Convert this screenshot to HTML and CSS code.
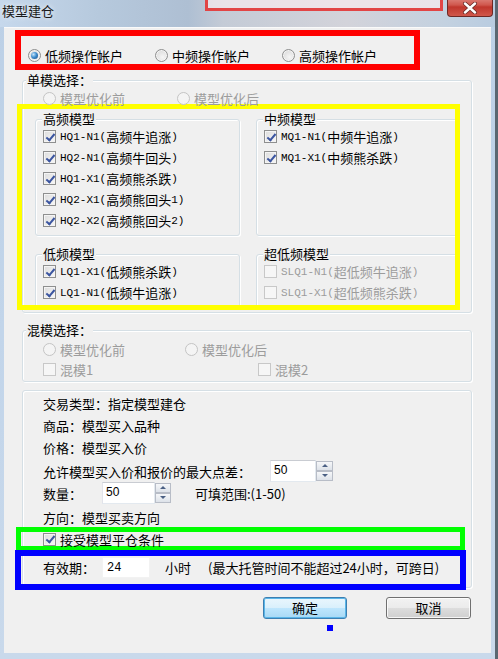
FILE: index.html
```html
<!DOCTYPE html>
<html lang="zh-CN">
<head>
<meta charset="utf-8">
<title>模型建仓</title>
<link rel="stylesheet" href="styles.css">
</head>
<body>
<div class="window">
  <div class="titlebar">
    <div class="bg-mark"></div>
    <span class="title">模型建仓</span>
    <div class="close">
      <svg width="16" height="12" viewBox="0 0 16 12"><path d="M3 1.5 L13 10.5 M13 1.5 L3 10.5" stroke="#6a2a26" stroke-width="4" stroke-linecap="round"/><path d="M3 1.5 L13 10.5 M13 1.5 L3 10.5" stroke="#ffffff" stroke-width="2.4" stroke-linecap="round"/></svg>
    </div>
  </div>
  <div class="client">
    <div class="ann-red acct">
      <div class="opt w127"><span class="radio on"></span>低频操作帐户</div>
      <div class="opt w127"><span class="radio"></span>中频操作帐户</div>
      <div class="opt"><span class="radio"></span>高频操作帐户</div>
    </div>

    <div class="group g-single">
      <div class="glabel">单模选择：</div>
      <div class="row r-dis">
        <div class="opt dis w134"><span class="radio"></span>模型优化前</div>
        <div class="opt dis"><span class="radio"></span>模型优化后</div>
      </div>
      <div class="ann-yellow">
        <div class="models">
          <div class="group sub">
            <div class="glabel">高频模型</div>
            <div class="opt crow"><span class="check on"></span><span class="m">HQ1-N1(</span>高频牛追涨<span class="m">)</span></div>
            <div class="opt crow"><span class="check on"></span><span class="m">HQ2-N1(</span>高频牛回头<span class="m">)</span></div>
            <div class="opt crow"><span class="check on"></span><span class="m">HQ1-X1(</span>高频熊杀跌<span class="m">)</span></div>
            <div class="opt crow"><span class="check on"></span><span class="m">HQ2-X1(</span>高频熊回头<span class="m">1)</span></div>
            <div class="opt crow"><span class="check on"></span><span class="m">HQ2-X2(</span>高频熊回头<span class="m">2)</span></div>
          </div>
          <div class="group sub">
            <div class="glabel">中频模型</div>
            <div class="opt crow"><span class="check on"></span><span class="m">MQ1-N1(</span>中频牛追涨<span class="m">)</span></div>
            <div class="opt crow"><span class="check on"></span><span class="m">MQ1-X1(</span>中频熊杀跌<span class="m">)</span></div>
          </div>
          <div class="group sub">
            <div class="glabel">低频模型</div>
            <div class="opt crow"><span class="check on"></span><span class="m">LQ1-X1(</span>低频熊杀跌<span class="m">)</span></div>
            <div class="opt crow"><span class="check on"></span><span class="m">LQ1-N1(</span>低频牛追涨<span class="m">)</span></div>
          </div>
          <div class="group sub">
            <div class="glabel">超低频模型</div>
            <div class="opt crow dis"><span class="check"></span><span class="m">SLQ1-N1(</span>超低频牛追涨<span class="m">)</span></div>
            <div class="opt crow dis"><span class="check"></span><span class="m">SLQ1-X1(</span>超低频熊杀跌<span class="m">)</span></div>
          </div>
        </div>
      </div>
    </div>

    <div class="group g-mix">
      <div class="glabel">混模选择：</div>
      <div class="row r-mixradio">
        <div class="opt dis w142"><span class="radio"></span>模型优化前</div>
        <div class="opt dis"><span class="radio"></span>模型优化后</div>
      </div>
      <div class="row r-mixcheck">
        <div class="opt dis w215"><span class="check"></span>混模1</div>
        <div class="opt dis"><span class="check"></span>混模2</div>
      </div>
    </div>

    <div class="group g-info">
      <div class="row info r1">交易类型：指定模型建仓</div>
      <div class="row info">商品：模型买入品种</div>
      <div class="row info">价格：模型买入价</div>
      <div class="row info r4">
        <span class="lbl-long">允许模型买入价和报价的最大点差：</span>
        <div class="spin s1">
          <div class="tb">50</div>
          <div class="spinbtns"><span class="up"></span><span class="down"></span></div>
        </div>
      </div>
      <div class="row info">
        <span class="lbl">数量：</span>
        <div class="spin s2">
          <div class="tb">50</div>
          <div class="spinbtns"><span class="up"></span><span class="down"></span></div>
        </div>
        <span class="range">可填范围:(1-50)</span>
      </div>
      <div class="row info r6">方向：模型买卖方向</div>
      <div class="ann-green">
        <div class="opt"><span class="check on"></span>接受模型平仓条件</div>
      </div>
      <div class="ann-blue">
        <span class="lbl">有效期：</span>
        <div class="tb tb24">24</div>
        <span class="hours">小时</span>
        <span class="note">(最大托管时间不能超过24小时，可跨日)</span>
      </div>
    </div>

    <div class="buttons">
      <div class="btn default">确定</div>
      <div class="btn cancel">取消</div>
    </div>
    <div class="dot"></div>
  </div>
</div>
</body>
</html>
```
FILE: styles.css
```css
* { box-sizing: border-box; }
html, body { margin: 0; padding: 0; }
body {
  width: 498px;
  height: 659px;
  overflow: hidden;
  background: #46535e;
  font-family: "Noto Sans CJK SC", "Microsoft YaHei", sans-serif;
  font-size: 13px;
  color: #000;
}
.window {
  width: 498px;
  height: 659px;
  background: linear-gradient(#bcd0e6, #c2d5ea 50%, #c9d9eb);
  border-right: 3px solid #5a6771;
  display: flex;
  flex-direction: column;
}
.titlebar {
  position: relative;
  height: 27px;
  flex: none;
  display: flex;
  align-items: flex-start;
  background: linear-gradient(to right, #c6d8ec 0%, #b6c9dd 20%, #aebfd3 38%, #c4cbd6 45%, #d3d3da 70%, #c3d1e0 90%, #b9cce0 100%);
  overflow: hidden;
}
.bg-mark {
  position: absolute;
  left: 205px;
  top: -4px;
  width: 238px;
  height: 15px;
  border: 3px solid rgba(225, 40, 40, 0.85);
  background: rgba(250, 235, 238, 0.7);
  filter: blur(0.6px);
}
.title {
  position: relative;
  padding-left: 2px;
  line-height: 22px;
  height: 22px;
  color: #1a1a1a;
  text-shadow: 0 0 5px rgba(255, 255, 255, 0.9);
}
.close {
  position: relative;
  margin-left: auto;
  margin-right: 2px;
  margin-top: -4px;
  width: 46px;
  height: 21px;
  border: 1px solid #6e2824;
  border-top: none;
  border-radius: 0 0 4px 4px;
  background: linear-gradient(#e2918a, #d0574d 45%, #c0362c 55%, #d0584c);
  display: flex;
  align-items: center;
  justify-content: center;
  padding-top: 3px;
}
.client {
  margin-left: 4px;
  width: 487px;
  height: 626px;
  flex: none;
  background: #f0f0f0;
  border-top: 1px solid #fafafa;
  display: flex;
  flex-direction: column;
  align-items: flex-start;
}

/* annotation boxes */
.ann-red {
  margin: 2px 0 0 11px;
  width: 405px;
  height: 40px;
  border: 6px solid #ff0000;
}
.acct {
  display: flex;
  align-items: center;
  padding: 10px 0 0 7px;
}
.ann-yellow {
  margin: -2px 0 0 -6px;
  width: 443px;
  height: 206px;
  border: 5px solid #ffff00;
  overflow: hidden;
}
.ann-green {
  margin: 0 0 0 -7px;
  width: 449px;
  height: 24px;
  border: 5px solid #00ff00;
  padding-left: 22px;
  display: flex;
  align-items: center;
}
.ann-blue {
  margin: -1px 0 -3px -8px;
  width: 451px;
  height: 40px;
  border: 6px solid #0000ff;
  padding: 1px 0 0 22px;
  display: flex;
  align-items: flex-start;
  line-height: 21px;
  position: relative;
}

/* group boxes */
.group {
  border: 1px solid #d5dfe5;
  border-radius: 3px;
  box-shadow: inset 1px 1px 0 #ffffff, 1px 1px 0 #ffffff;
}
.glabel {
  width: max-content;
  height: 16px;
  line-height: 16px;
  margin: -9px 0 0 3px;
  padding: 0 1px;
  background: #f0f0f0;
  position: relative;
}
.g-single {
  margin: 10px 0 0 18px;
  width: 450px;
  padding-bottom: 2px;
}
.g-mix {
  margin: 17px 0 0 18px;
  width: 450px;
  padding-bottom: 1px;
}
.g-info {
  margin: 8px 0 0 18px;
  width: 450px;
}
.models {
  padding: 10px 0 0 13px;
  display: grid;
  grid-template-columns: 205px 205px;
  column-gap: 16px;
  row-gap: 18px;
}
.sub { padding: 0 0 4px 7px; }
.sub .glabel { margin: -9px 0 -1px -1px; }

/* rows */
.row {
  display: flex;
  align-items: center;
  padding-left: 20px;
}
.r-dis { height: 16px; margin-top: 2px; }
.r-mixradio { height: 20px; margin-top: 1px; }
.r-mixcheck { height: 21px; }
.info { height: 22px; }
.r1 { margin-top: 1px; }
.r4 { margin-top: 2px; }
.r6 { height: 20px; margin-top: 3px; }

.opt {
  display: flex;
  align-items: center;
  white-space: nowrap;
}
.crow { height: 21px; }
.w127 { width: 127px; }
.w134 { width: 134px; }
.w142 { width: 142px; }
.w215 { width: 215px; }
.dis { color: #9c9c9c; }
.m {
  font-family: "Liberation Mono", "Courier New", monospace;
  font-size: 11px;
}

/* controls */
.radio {
  position: relative;
  flex: none;
  width: 13px;
  height: 13px;
  margin-right: 4px;
  border-radius: 50%;
  border: 1px solid #8e8f8f;
  background: radial-gradient(circle at 60% 65%, #f6f6f6 0%, #dedede 70%, #cfcfcf 100%);
  box-shadow: inset 0 0 0 1px #f4f4f4;
}
.radio.on::after {
  content: "";
  position: absolute;
  left: 2px;
  top: 2px;
  width: 7px;
  height: 7px;
  border-radius: 50%;
  background: radial-gradient(circle at 35% 35%, #c8e6fb 0%, #3f8fd0 45%, #17467d 100%);
}
.dis .radio {
  border-color: #c4c4c4;
  background: #f4f4f4;
  box-shadow: none;
}
.check {
  position: relative;
  flex: none;
  width: 13px;
  height: 13px;
  margin-right: 4px;
  border: 1px solid #8e8f8f;
  background: linear-gradient(135deg, #dcdcdc, #f8f8f8);
  box-shadow: inset 0 0 0 1px #f4f4f4;
}
.check.on::after {
  content: "";
  position: absolute;
  left: 3.5px;
  top: 0.5px;
  width: 3px;
  height: 7px;
  border-right: 2px solid #3b55a0;
  border-bottom: 2px solid #3b55a0;
  transform: rotate(40deg);
}
.dis .check {
  border-color: #c8c8c8;
  background: #f6f6f6;
  box-shadow: none;
}

.lbl-long { width: 227px; flex: none; }
.lbl { width: 59px; flex: none; }
.spin { display: flex; height: 22px; flex: none; }
.tb {
  background: #ffffff;
  border: 1px solid;
  border-color: #c9ccd2 #e3e9ef #e3e9ef #e2e3ea;
  font-family: "Liberation Sans", Arial, sans-serif;
  font-size: 12px;
  line-height: 18px;
  padding-left: 3px;
  color: #000;
}
.s1 .tb { width: 46px; }
.s2 .tb { width: 53px; }
.spinbtns {
  display: flex;
  flex-direction: column;
  width: 17px;
  padding: 1px 0;
}
.s2 .spinbtns { width: 16px; }
.spinbtns span {
  flex: 1;
  position: relative;
  border: 1px solid #b8bdc7;
  background: linear-gradient(#f6f7f9, #dde2e9);
}
.spinbtns span::after {
  content: "";
  position: absolute;
  left: 50%;
  top: 50%;
  margin: -2px 0 0 -3px;
  border-left: 3px solid transparent;
  border-right: 3px solid transparent;
}
.spinbtns .up::after { border-bottom: 3px solid #4b6084; }
.spinbtns .down::after { border-top: 3px solid #4b6084; }
.range { margin-left: 24px; }

.tb24 {
  width: 48px;
  height: 21px;
  border-color: #f2f2f2;
  font-family: "Liberation Mono", monospace;
  font-size: 12px;
  line-height: 20px;
  padding-left: 4px;
}
.hours { margin-left: 15px; }
.note { margin-left: 17px; }

.buttons {
  margin-top: 9px;
  display: flex;
}
.btn {
  height: 22px;
  line-height: 20px;
  text-align: center;
  border-radius: 3px;
  border: 1px solid #707070;
  background: linear-gradient(#f2f2f2 0%, #ebebeb 50%, #dddddd 51%, #cfcfcf 100%);
  box-shadow: inset 0 0 0 1px rgba(255, 255, 255, 0.8);
}
.default {
  margin-left: 259px;
  width: 84px;
  border-color: #3c7fb1;
  background: linear-gradient(#eaf6fd 0%, #d9f0fc 50%, #bee6fd 51%, #a7d9f5 100%);
  box-shadow: inset 0 0 0 1px #5ab6e8;
}
.cancel {
  margin-left: 39px;
  width: 85px;
}
.dot {
  margin: 6px 0 0 323px;
  width: 6px;
  height: 6px;
  background: #0000ff;
}
```
